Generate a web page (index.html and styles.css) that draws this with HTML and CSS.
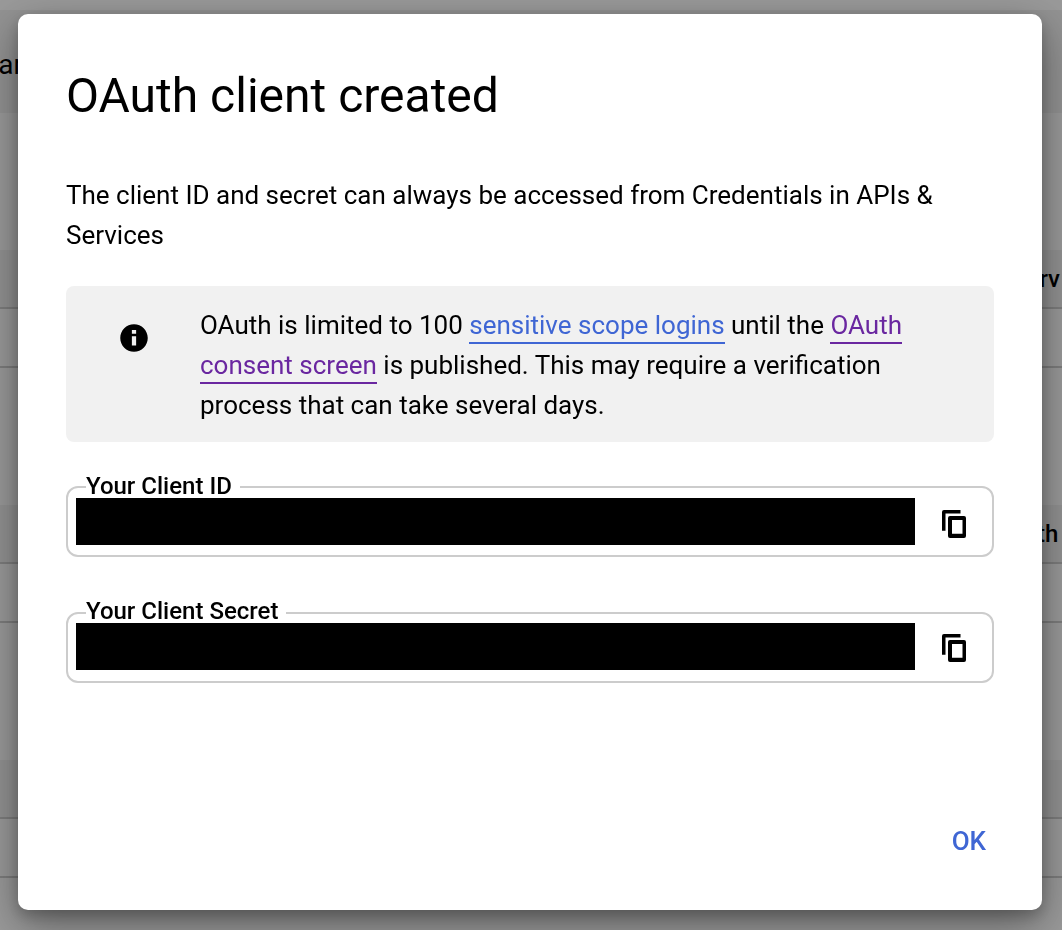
FILE: index.html
```html
<!DOCTYPE html>
<html lang="en">
<head>
    <meta charset="UTF-8">
    <meta name="viewport" content="width=device-width, initial-scale=1.0">
    <title>OAuth client created</title>
    <link rel="stylesheet" href="styles.css">
</head>
<body>
    <div class="page">
        <div class="page-top"></div>
        <div class="page-title">Calendar</div>
        <div class="section-gap"></div>
        <div class="table-head head-one">Serv</div>
        <div class="table-row"></div>
        <div class="table-row row-tall"></div>
        <div class="table-head head-two">with</div>
        <div class="table-row"></div>
        <div class="table-row row-tall"></div>
        <div class="table-head"></div>
        <div class="table-row"></div>
    </div>

    <div class="overlay">
        <div class="dialog">
            <h2>OAuth client created</h2>
            <p class="intro">The client ID and secret can always be accessed from Credentials in APIs &amp; Services</p>

            <div class="notice">
                <div class="notice-icon">
                    <svg width="30" height="30" viewBox="0 0 24 24"><path d="M12 1C5.900 1 1 5.900 1 12s4.900 11 11 11 11-4.900 11-11S18.100 1 12 1zm1.700 17h-3.400v-7.500h3.400V18zm0-9.500h-3.400V5.600h3.400v2.900z"/></svg>
                </div>
                <p>OAuth is limited to 100 <a class="link" href="#">sensitive scope logins</a> until the <a class="link visited" href="#">OAuth consent screen</a> is published. This may require a verification process that can take several days.</p>
            </div>

            <fieldset class="secret">
                <legend>Your Client ID</legend>
                <div class="redacted"></div>
                <button class="copy" aria-label="Copy client ID">
                    <svg width="24" height="28" viewBox="0 0 24 28"><path d="M2 0H18.500V3.500H3.500V20.700H0V2Q0 0 2 0z"/><path fill-rule="evenodd" d="M8 6H22Q24 6 24 8V26Q24 28 22 28H8Q6 28 6 26V8Q6 6 8 6zM10 10V23.700H20.500V10z"/></svg>
                </button>
            </fieldset>

            <fieldset class="secret">
                <legend>Your Client Secret</legend>
                <div class="redacted"></div>
                <button class="copy" aria-label="Copy client secret">
                    <svg width="24" height="28" viewBox="0 0 24 28"><path d="M2 0H18.500V3.500H3.500V20.700H0V2Q0 0 2 0z"/><path fill-rule="evenodd" d="M8 6H22Q24 6 24 8V26Q24 28 22 28H8Q6 28 6 26V8Q6 6 8 6zM10 10V23.700H20.500V10z"/></svg>
                </button>
            </fieldset>

            <div class="actions">
                <button class="ok">OK</button>
            </div>
        </div>
    </div>
</body>
</html>
```

FILE: styles.css
```css
html, body {
    height: 100%;
}
body {
    font-family: Roboto, sans-serif;
    margin: 0;
    overflow: hidden;
    color: #000;
    background: #fff;
}
.page {
    height: 930px;
    overflow: hidden;
}
.page-top {
    height: 10px;
}
.page-title {
    height: 103px;
    padding: 38px 0 0 0;
    box-sizing: border-box;
    background: #f3f3f3;
    text-indent: -88px;
    font-size: 28px;
    line-height: 34px;
    white-space: nowrap;
}
.section-gap {
    height: 137px;
}
.table-head {
    height: 59px;
    background: #f3f3f3;
    border-bottom: 2px solid #d0d0d0;
    box-sizing: border-box;
    font-size: 24px;
    font-weight: 500;
    line-height: 58px;
    white-space: nowrap;
}
.head-one {
    padding-left: 1012px;
}
.head-two {
    padding-left: 1013px;
}
.table-row {
    height: 59px;
    border-bottom: 2px solid #d0d0d0;
    box-sizing: border-box;
}
.row-tall {
    height: 137px;
    border-bottom: none;
}
.overlay {
    position: fixed;
    top: 0;
    left: 0;
    right: 0;
    bottom: 0;
    background: rgba(0, 0, 0, 0.4);
}
.dialog {
    position: absolute;
    top: 14px;
    left: 18px;
    width: 1024px;
    height: 896px;
    box-sizing: border-box;
    padding: 49px 48px 0;
    background: #fff;
    border-radius: 10px;
    box-shadow: 0 14px 44px rgba(0, 0, 0, 0.4), 0 6px 14px rgba(0, 0, 0, 0.2);
    display: flex;
    flex-direction: column;
}
.dialog h2 {
    margin: 0;
    font-size: 48px;
    font-weight: 400;
    line-height: 66px;
}
.intro {
    margin: 46px 0 0;
    font-size: 26px;
    line-height: 40px;
}
.notice {
    display: flex;
    margin-top: 31px;
    height: 156px;
    box-sizing: border-box;
    padding: 19px 40px 0 0;
    background: #f1f1f1;
    border-radius: 8px;
}
.notice-icon {
    width: 134px;
    flex-shrink: 0;
    display: flex;
    justify-content: center;
    padding: 18px 0 0 2px;
    box-sizing: border-box;
    height: 60px;
}
.notice p {
    margin: 0;
    font-size: 26px;
    line-height: 40px;
}
.link {
    color: #3f66d4;
    text-decoration: none;
    border-bottom: 2px solid #3f66d4;
    padding-bottom: 2px;
}
.link.visited {
    color: #6a27a0;
    border-bottom-color: #6a27a0;
}
.secret {
    display: flex;
    align-items: flex-start;
    margin: 32px 0 0;
    padding: 0 8px;
    height: 83px;
    box-sizing: border-box;
    border: 2px solid #ccc;
    border-radius: 12px;
    min-width: 0;
}
.secret + .secret {
    margin-top: 43px;
}
.secret legend {
    margin-left: 10px;
    padding: 1px 8px 3px 0;
    font-size: 24px;
    font-weight: 500;
    line-height: 22px;
}
.secret + .secret legend {
    padding: 0 8px 4px 0;
}
.redacted {
    width: 839px;
    height: 47px;
    margin-top: -2px;
    background: #000;
}
.secret + .secret .redacted {
    margin-top: -3px;
}
.copy {
    display: flex;
    background: none;
    border: none;
    padding: 0;
    margin: 10px 0 0 27px;
    cursor: pointer;
}
.secret + .secret .copy {
    margin-top: 8px;
}
.actions {
    margin-top: auto;
    display: flex;
    justify-content: flex-end;
    padding-bottom: 49px;
}
.ok {
    background: none;
    border: none;
    padding: 0 8px;
    font-family: Roboto, sans-serif;
    font-size: 26px;
    font-weight: 500;
    line-height: 40px;
    color: #3f66d4;
    cursor: pointer;
}
```
